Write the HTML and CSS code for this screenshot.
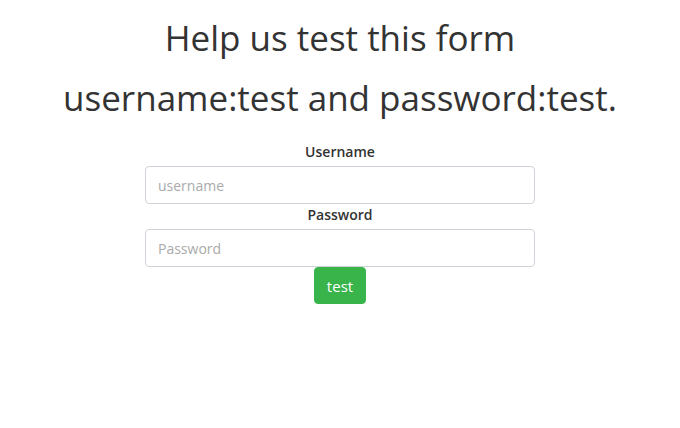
FILE: index.html
```html
<!DOCTYPE html>
<html lang="en">
<head>
<meta charset="utf-8">
<title>Help us test this form</title>
<link rel="stylesheet" href="styles.css">
</head>
<body>
<main class="page">
  <h1 class="title">Help us test this form<br>username:test and password:test.</h1>
  <form class="form">
    <label class="label" for="username">Username</label>
    <input class="input" id="username" type="text" placeholder="username">
    <label class="label" for="password">Password</label>
    <input class="input" id="password" type="password" placeholder="Password">
    <button class="btn" type="button">test</button>
  </form>
</main>
</body>
</html>
```

FILE: styles.css
```css
* { box-sizing: border-box; }
html, body { margin: 0; padding: 0; background: #fff; }
body {
  font-family: "Open Sans", "Noto Sans", "Liberation Sans", sans-serif;
  color: #333;
  font-size: 16px;
}
.page {
  display: flex;
  flex-direction: column;
  align-items: center;
  padding-top: 8px;
}
.title {
  margin: 0 0 13px;
  font-size: 35px;
  font-weight: 400;
  line-height: 60px;
  text-align: center;
  color: #333;
}
.form {
  width: 390px;
  display: flex;
  flex-direction: column;
  align-items: center;
}
.label {
  font-size: 14px;
  font-weight: 600;
  line-height: 21px;
  padding-bottom: 4px;
  color: #333;
}
.input {
  width: 100%;
  height: 38px;
  padding: 6px 12px;
  border: 1px solid #ced4da;
  border-radius: 4px;
  font-family: inherit;
  font-size: 14px;
  color: #333;
  outline: none;
}
.input::placeholder { color: #aaa; }
.btn {
  height: 37px;
  padding: 0 12px;
  border: 1px solid #38b44a;
  border-radius: 4px;
  background: #38b44a;
  color: #fff;
  font-family: inherit;
  font-size: 15px;
}
```
